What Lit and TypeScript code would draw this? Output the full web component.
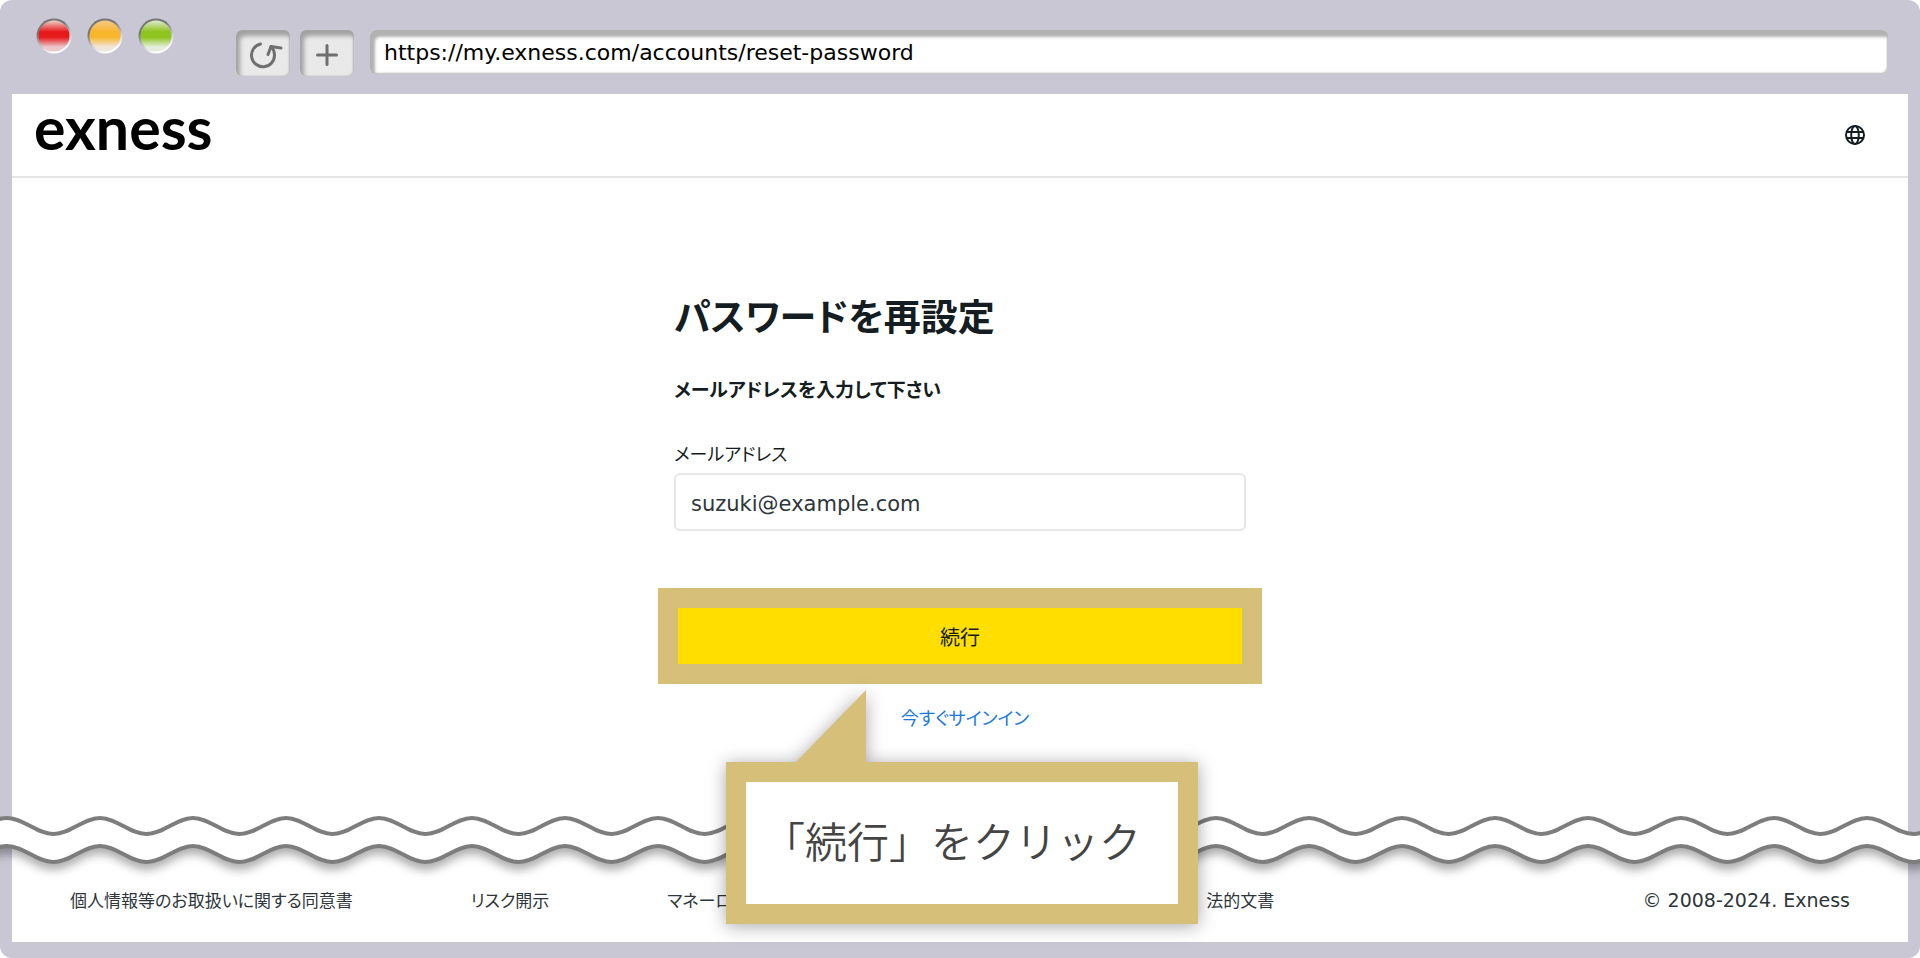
import { LitElement, html, css, svg } from "lit";
import { customElement, property } from "lit/decorators.js";

const WAVE_PERIOD = 93;
const WAVE_COUNT = 60;

/** One wavy line, drawn left to right from a crest. */
function wave(y: number): string {
  const half = WAVE_PERIOD / 2;
  const start = 7 - WAVE_PERIOD;
  let d = `M${start} ${y}`;
  for (let i = 0; i < WAVE_COUNT; i++) {
    d += `c17 0 ${half - 17} 16 ${half} 16s${half - 17} -16 ${half} -16`;
  }
  return d;
}

/** The same line, drawn right to left, to close the band. */
function waveBack(y: number): string {
  const half = WAVE_PERIOD / 2;
  const end = 7 - WAVE_PERIOD + WAVE_PERIOD * WAVE_COUNT;
  let d = `L${end} ${y}`;
  for (let i = 0; i < WAVE_COUNT; i++) {
    d += `c-17 0 ${17 - half} 16 ${-half} 16s${17 - half} -16 ${-half} -16`;
  }
  return d + "z";
}

@customElement("torn-band")
export class TornBand extends LitElement {
  static styles = css`
    :host {
      display: block;
    }
    .band {
      display: block;
      width: 100%;
      height: 72px;
    }
    .paper {
      fill: #fff;
      filter: drop-shadow(0 8px 5px rgba(0, 0, 0, 0.32));
    }
    .edge {
      fill: none;
      stroke: #7d7d7d;
      stroke-width: 4;
    }
  `;

  render() {
    return html`<svg class="band" aria-hidden="true">
      ${svg`<path class="paper" d=${wave(4) + waveBack(32)}></path>
      <path class="edge" d=${wave(4)}></path>
      <path class="edge" d=${wave(32)}></path>`}
    </svg>`;
  }
}

@customElement("browser-bar")
export class BrowserBar extends LitElement {
  @property() url = "";

  static styles = css`
    :host {
      display: flex;
      align-items: flex-start;
      height: 94px;
      box-sizing: border-box;
      padding: 18px 20px 0 24px;
    }
    .lights {
      display: flex;
      gap: 15px;
      flex: none;
      margin-right: 62px;
    }
    .light {
      width: 36px;
      height: 36px;
      display: block;
    }
    .tools {
      display: flex;
      gap: 10px;
      flex: 1;
      padding-top: 12px;
    }
    .tool {
      flex: none;
      width: 54px;
      height: 46px;
      padding: 0;
      border: 0;
      border-radius: 6px;
      background: #e9e9e9;
      box-shadow: inset 3px 5px 4px 1px #a2a2a2, inset -1px 0 2px #b8b8b8;
    }
    .tool svg {
      display: block;
      width: 54px;
      height: 46px;
      fill: none;
      stroke: #6f6f6f;
      stroke-width: 3;
      stroke-linecap: round;
      stroke-linejoin: round;
    }
    .address {
      flex: 1;
      min-width: 0;
      height: 44px;
      box-sizing: border-box;
      margin-left: 6px;
      padding: 0 14px;
      border: 0;
      border-radius: 6px;
      background: #fff;
      box-shadow: inset 4px 6px 3px 1px #b2b2b2, inset -1px -1px 2px #b8b8b8;
      color: #000;
      font: 22px "DejaVu Sans", sans-serif;
      outline: none;
    }
  `;

  private light(id: string, top: string, mid: string, bottom: string) {
    return html`<svg class="light" viewBox="0 0 36 36" aria-hidden="true">
      <defs>
        <linearGradient id=${id} x1="0" y1="0" x2="0" y2="1">
          <stop offset="0" stop-color=${top}></stop>
          <stop offset=".36" stop-color=${mid}></stop>
          <stop offset=".54" stop-color=${mid}></stop>
          <stop offset=".85" stop-color=${bottom}></stop>
        </linearGradient>
        <linearGradient id="rim" x1=".25" y1="0" x2=".7" y2="1">
          <stop offset=".3" stop-color="#777"></stop>
          <stop offset=".6" stop-color="#c4c3cc"></stop>
          <stop offset=".9" stop-color="#fff"></stop>
        </linearGradient>
      </defs>
      <circle cx="18" cy="18" r="17.5" fill="url(#rim)"></circle>
      <circle cx="18" cy="18" r="15.5" fill=${`url(#${id})`}></circle>
    </svg>`;
  }

  render() {
    return html`
      <div class="lights">
        ${this.light("red", "#ecd2cd", "#e71a1b", "#ecc8ca")}
        ${this.light("amber", "#f2c98a", "#f8b62d", "#f1e6da")}
        ${this.light("green", "#dfe9cf", "#8fc41f", "#e4eedb")}
      </div>
      <div class="tools">
        <button class="tool" aria-label="reload">
          <svg viewBox="0 0 54 46" aria-hidden="true">
            <path d="M24.500 14A11.500 11.500 0 1 0 38.500 25Q38.500 20 35 16.500"></path>
            <path d="M32 24.500L35 16.500L45 18"></path>
          </svg>
        </button>
        <button class="tool" aria-label="new tab">
          <svg viewBox="0 0 54 46" aria-hidden="true">
            <path d="M17.500 25H36.500M27 15.500V34.500"></path>
          </svg>
        </button>
        <input class="address" type="text" aria-label="URL" .value=${this.url} />
      </div>
    `;
  }
}

@customElement("app-root")
export class AppRoot extends LitElement {
  static styles = css`
    :host {
      display: block;
      color: #141d22;
      font-family: "Noto Sans CJK JP", sans-serif;
      font-feature-settings: "palt";
    }
    .window {
      display: flex;
      flex-direction: column;
      min-height: 100vh;
      box-sizing: border-box;
      padding: 0 12px 16px;
      border-radius: 12px;
      background: #c8c7d3;
      overflow: hidden;
    }
    .page {
      flex: 1;
      display: flex;
      flex-direction: column;
      background: #fff;
    }
    .header {
      display: flex;
      align-items: center;
      justify-content: space-between;
      height: 84px;
      box-sizing: border-box;
      padding: 0 43px 0 22px;
      border-bottom: 2px solid #e6e6e6;
    }
    .logo {
      color: #000;
      font: 700 59px/60px Lato, sans-serif;
      text-decoration: none;
      padding-bottom: 14px;
    }
    .language {
      width: 20px;
      height: 20px;
      padding: 0;
      border: 0;
      background: none;
    }
    .language svg {
      display: block;
      fill: none;
      stroke: #141d22;
      stroke-width: 2;
    }
    .main {
      flex: 1;
      display: flex;
      flex-direction: column;
      align-items: center;
    }
    .form {
      display: flex;
      flex-direction: column;
      width: 572px;
      max-width: 100%;
      padding-top: 109px;
    }
    .title {
      margin: 0;
      font-size: 37px;
      line-height: 56px;
      font-weight: 700;
    }
    .hint {
      margin: 32px 0 0;
      font-size: 19px;
      line-height: 28px;
      font-weight: 700;
    }
    .label {
      margin-top: 36px;
      font-size: 18px;
      line-height: 28px;
    }
    .email {
      height: 58px;
      box-sizing: border-box;
      margin-top: 6px;
      padding: 3px 15px 0;
      border: 2px solid #e6e6e6;
      border-radius: 6px;
      color: #2d363b;
      font: 21px "DejaVu Sans", sans-serif;
      outline: none;
    }
    .spotlight {
      position: relative;
      z-index: 2;
      display: flex;
      margin: 57px -16px 0;
      border: 20px solid #d6bf78;
    }
    .submit {
      flex: 1;
      height: 56px;
      padding: 0;
      border: 0;
      background: #ffde00;
      color: #141d22;
      font: inherit;
      font-size: 20px;
    }
    .signin {
      align-self: center;
      margin-top: 19px;
      padding-left: 10px;
      color: #1b7ad4;
      font-size: 18px;
      line-height: 28px;
      text-decoration: none;
    }
    .callout {
      position: absolute;
      z-index: 1;
      top: 154px;
      left: 48px;
      width: 472px;
      height: 162px;
      box-sizing: border-box;
      display: flex;
      align-items: center;
      justify-content: center;
      padding: 0 20px 8px 0;
      border: 20px solid #d6bf78;
      background: #fff;
      color: #444;
      font-size: 42px;
      font-weight: 350;
      font-feature-settings: normal;
      white-space: nowrap;
      filter: drop-shadow(0 2px 9px rgba(0, 0, 0, 0.35));
    }
    .callout::before {
      content: "";
      position: absolute;
      left: 50px;
      bottom: 142px;
      width: 70px;
      height: 72px;
      background: #d6bf78;
      clip-path: polygon(100% 0, 100% 100%, 0 100%);
    }
    .torn {
      margin: 0 -12px;
    }
    .footer {
      display: flex;
      align-items: center;
      justify-content: space-between;
      height: 56px;
      box-sizing: border-box;
      padding: 0 58px 28px;
      font-size: 17px;
      line-height: 26px;
      color: #2d363b;
    }
    .links {
      display: flex;
      gap: 118px;
      margin: 0;
      padding: 0;
      list-style: none;
      white-space: nowrap;
    }
    .item-wide {
      width: 421px;
    }
    .link {
      color: inherit;
      text-decoration: none;
    }
    .copyright {
      font-family: "DejaVu Sans", sans-serif;
      font-size: 19px;
      white-space: nowrap;
    }
  `;

  render() {
    return html`
      <div class="window">
        <browser-bar url="https://my.exness.com/accounts/reset-password"></browser-bar>
        <div class="page">
          <header class="header">
            <a class="logo" href="#">exness</a>
            <button class="language" aria-label="language">
              <svg width="20" height="20" viewBox="0 0 20 20" aria-hidden="true">
                <circle cx="10" cy="10" r="9"></circle>
                <ellipse cx="10" cy="10" rx="3.800" ry="9"></ellipse>
                <path d="M1.500 7H18.500M1.500 13H18.500"></path>
              </svg>
            </button>
          </header>
          <main class="main">
            <form class="form" @submit=${(e: Event) => e.preventDefault()}>
              <h1 class="title">パスワードを再設定</h1>
              <p class="hint">メールアドレスを入力して下さい</p>
              <label class="label" for="email">メールアドレス</label>
              <input class="email" id="email" type="email" .value=${"suzuki@example.com"} />
              <div class="spotlight">
                <button class="submit" type="submit">続行</button>
                <div class="callout">「続行」をクリック</div>
              </div>
              <a class="signin" href="#">今すぐサインイン</a>
            </form>
          </main>
          <torn-band class="torn"></torn-band>
          <footer class="footer">
            <ul class="links">
              <li><a class="link" href="#">個人情報等のお取扱いに関する同意書</a></li>
              <li><a class="link" href="#">リスク開示</a></li>
              <li class="item-wide"><a class="link" href="#">マネーロ</a></li>
              <li><a class="link" href="#">法的文書</a></li>
            </ul>
            <span class="copyright">© 2008-2024. Exness</span>
          </footer>
        </div>
      </div>
    `;
  }
}
